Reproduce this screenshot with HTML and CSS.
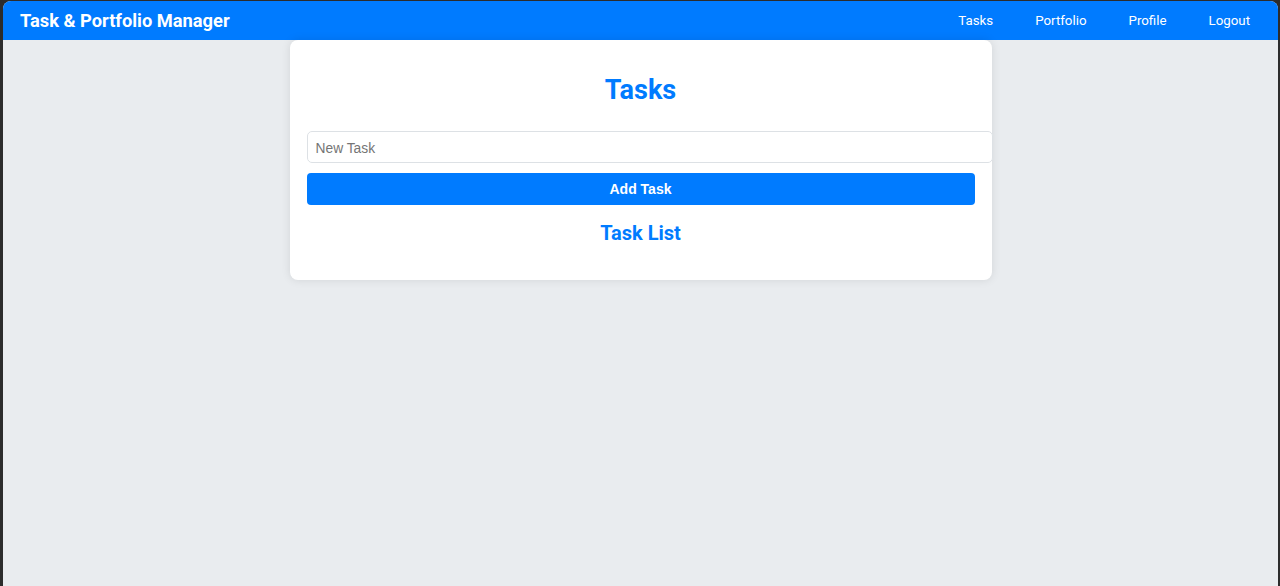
FILE: index.html
```html
<!DOCTYPE html>
<html lang="en">
<head>
<meta charset="utf-8">
<title>Task &amp; Portfolio Manager</title>
<link rel="stylesheet" href="styles.css">
</head>
<body>
<div class="app">
  <header class="navbar">
    <div class="brand">Task &amp; Portfolio Manager</div>
    <nav class="links">
      <a href="#">Tasks</a>
      <a href="#">Portfolio</a>
      <a href="#">Profile</a>
      <a href="#">Logout</a>
    </nav>
  </header>
  <main class="main">
    <section class="card">
      <h1 class="title">Tasks</h1>
      <form class="task-form">
        <input class="task-input" type="text" placeholder="New Task">
        <button class="task-btn" type="button">Add Task</button>
      </form>
      <h2 class="subtitle">Task List</h2>
    </section>
  </main>
</div>
</body>
</html>
```
FILE: styles.css
```css
* { box-sizing: content-box; }
html, body { height: 100%; }
body {
  margin: 0;
  padding: 1px 2px 0 3px;
  background: #2c2c2c;
  font-family: Roboto, "Liberation Sans", Arial, sans-serif;
  box-sizing: border-box;
}
.app {
  height: 100%;
  background: #e9ecef;
  border-radius: 8px 8px 0 0;
  overflow: hidden;
  display: flex;
  flex-direction: column;
}
.navbar {
  height: 39px;
  background: #007bff;
  color: #fff;
  display: flex;
  align-items: center;
  justify-content: space-between;
  padding: 0 28px 0 17px;
  flex-shrink: 0;
}
.brand {
  font-weight: 700;
  font-size: 18.3px;
}
.links {
  display: flex;
  gap: 42px;
}
.links a {
  color: #fff;
  text-decoration: none;
  font-size: 13.3px;
}
.main {
  display: flex;
  justify-content: center;
}
.card {
  width: 668px;
  padding: 17px;
  background: #fff;
  border-radius: 8px;
  box-shadow: 0 0 10px rgba(0, 0, 0, 0.1);
}
.title {
  margin: 17px 0 25px;
  text-align: center;
  color: #007bff;
  font-size: 27px;
  font-weight: 700;
}
.task-form {
  display: flex;
  flex-direction: column;
  align-items: flex-start;
}
.task-input {
  width: 100%;
  padding: 9px 8px 7px;
  border: 1px solid #dde1e5;
  border-radius: 5px;
  font-family: "Liberation Sans", Arial, sans-serif;
  font-size: 13.8px;
  line-height: 14px;
  height: 14px;
  outline: none;
}
.task-input::placeholder { color: #757575; }
.task-btn {
  box-sizing: border-box;
  width: 100%;
  height: 32px;
  margin-top: 10px;
  background: #007bff;
  color: #fff;
  border: none;
  border-radius: 4px;
  font-family: "Liberation Sans", Arial, sans-serif;
  font-weight: 700;
  font-size: 14px;
}
.subtitle {
  margin: 16px 0 18px;
  text-align: center;
  color: #007bff;
  font-size: 20px;
  font-weight: 700;
}
```
